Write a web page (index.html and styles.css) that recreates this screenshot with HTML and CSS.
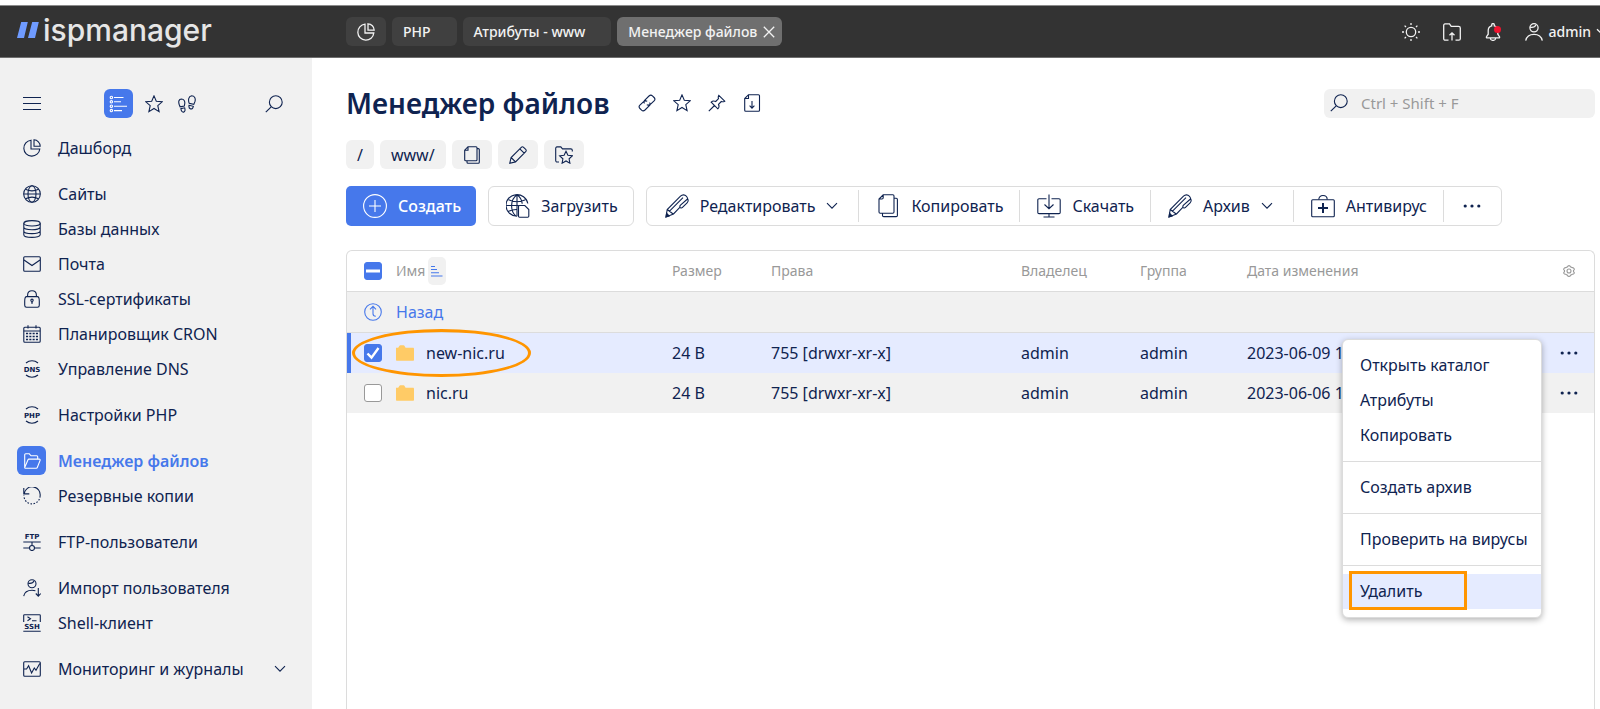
FILE: index.html
```html
<!DOCTYPE html>
<html lang="ru">
<head>
<meta charset="utf-8">
<meta name="viewport" content="width=device-width, initial-scale=1">
<title>Менеджер файлов — ispmanager</title>
<link rel="stylesheet" href="styles.css">
</head>
<body>
<svg class="sprite" aria-hidden="true">
  <symbol id="pie" viewBox="0 0 18 18"><path d="M8 1.2A8 8 0 1 0 16.8 10H8zM11 .8v6.4h6.2A6.5 6.5 0 0 0 11 .8z"/></symbol>
  <symbol id="star" viewBox="0 0 18 18"><path d="M9 .9l2.3 5.3 5.9.6-4.400 3.900 1.300 5.900L9 13.500l-5.100 3.100 1.300-5.900L.8 6.800l5.900-.6z"/></symbol>
  <symbol id="feet" viewBox="0 0 18 18"><path d="M1.200 9.500C.2 6.500.8 4.200 3.400 4c2.600 0 3.800 2.300 3.300 4.900l-.4 2.100-4.200.8zM2.900 13.600l3.800-.8c.6 2.300.4 4-1.100 4.300-1.600.3-2.400-1.400-2.700-3.500zM11.200 8.300c-1.200-3.200-.7-7.200 2.400-7.500 3 0 4.200 2.600 3.400 5.600l-1.200 3zM11 10.300l4.300 1c-.4 2-1.300 3-2.800 2.600-1.400-.4-1.800-1.700-1.500-3.600z"/></symbol>
  <symbol id="search" viewBox="0 0 18 18"><circle cx="10.800" cy="7.200" r="6.400"/><path d="M6.200 11.800L.8 17.200"/></symbol>
  <symbol id="globe" viewBox="0 0 18 18"><circle cx="9" cy="9" r="8.300"/><ellipse cx="9" cy="9" rx="4" ry="8.300"/><path d="M.7 9h16.600M2.500 4.200c4 2 9 2 13 0M2.500 13.800c4-2 9-2 13 0"/></symbol>
  <symbol id="db" viewBox="0 0 18 18"><ellipse cx="9" cy="3.300" rx="8.200" ry="2.700"/><path d="M.8 3.300v11.400c0 3.600 16.400 3.600 16.400 0V3.300M.8 7.100c0 3.600 16.400 3.600 16.400 0M.8 10.900c0 3.600 16.400 3.600 16.400 0"/></symbol>
  <symbol id="mail" viewBox="0 0 18 18"><rect x=".7" y="1.800" width="16.600" height="14.400" rx="1"/><path d="M1 5l8 5.500L17 5"/></symbol>
  <symbol id="lock" viewBox="0 0 18 18"><path d="M3.600 6.600h10.800c1 0 1.900 2.200 1.900 4.700v3.900c0 1.200-.6 2-1.800 2h-11c-1.200 0-1.800-.8-1.800-2v-3.900c0-2.500.9-4.700 1.900-4.700zM4.600 6.400V5.200C4.600 2.400 6.500.7 9 .7s4.400 1.700 4.400 4.500v1.200"/><circle cx="9" cy="10.300" r="1.200"/><path d="M9 11.500v2.200" stroke-width="1.400"/></symbol>
  <symbol id="calendar" viewBox="0 0 18 18"><rect x=".8" y="2.300" width="16.400" height="15" rx="1"/><path d="M.8 6h16.400M5 .3v3.200M13 .3v3.200"/><path d="M3 8.500h12M3 11.500h12M3 14.500h12" stroke-dasharray="2.100 1.200" stroke-width="1.700"/></symbol>
  <symbol id="dns" viewBox="0 0 18 18"><path d="M3 3a9 9 0 0 1 12 0M3 15a9 9 0 0 0 12 0"/><text x="9" y="11.600" text-anchor="middle" class="glyph">DNS</text></symbol>
  <symbol id="php" viewBox="0 0 18 18"><path d="M3 3a9 9 0 0 1 12 0M3 15a9 9 0 0 0 12 0"/><text x="9" y="11.600" text-anchor="middle" class="glyph">PHP</text></symbol>
  <symbol id="folder-open" viewBox="0 0 18 18"><path d="M1.700 15.300V2.800c0-.6.400-1 1-1h3.600l1.700 2h5.700c.6 0 1 .4 1 1v2.400M1.700 15.600L5 7.700c.2-.4.500-.6.900-.6h10.300c.8 0 1.200.6.900 1.300l-2.800 7.100c-.2.500-.5.700-1 .7H2.200c-.4 0-.6-.3-.5-.6z"/></symbol>
  <symbol id="restore" viewBox="0 0 18 18"><path d="M.8.900v6h5.500M1.200 6.600A8 8 0 0 1 17.100 9"/><path d="M17.100 9A8.100 8.100 0 0 1 .9 8.500" stroke-dasharray="1.600 1.500"/></symbol>
  <symbol id="ftp" viewBox="0 0 18 18"><text x="9" y="6" text-anchor="middle" class="glyph">FTP</text><path d="M.3 9h17.400M9 9v3.300M.3 15h6M11.700 15h6"/><circle cx="9" cy="15" r="2.500"/></symbol>
  <symbol id="import" viewBox="0 0 18 18"><circle cx="9" cy="4.700" r="4"/><path d="M5.200 4.200c3 .6 5-.4 6-2.400M.7 17.200c.8-4.400 4-6 8.300-6 1.400 0 2.500.2 3.400.5M15.300 9v8M12.800 14.500l2.500 2.600 2.400-2.600"/></symbol>
  <symbol id="ssh" viewBox="0 0 18 18"><path d="M.7 8V1.500c0-.5.3-.8.8-.8h15c.5 0 .8.300.8.8V8M4.500 2.800l3 2-3 2M9 6.800h4.500M.3 17.300h17.400"/><text x="9" y="14.800" text-anchor="middle" class="glyph">SSH</text></symbol>
  <symbol id="monitor" viewBox="0 0 18 18"><rect x=".7" y="1.700" width="16.600" height="14.600" rx="1"/><path d="M1 9h2.600l2-3.300 3 7.300L11.300 8l1.700 2.300L16.800 3.500"/></symbol>
  <symbol id="chevron" viewBox="0 0 12 8"><path d="M1 1.200l5 5 5-5"/></symbol>
  <symbol id="close" viewBox="0 0 12 12"><path d="M.8.800l10.400 10.400M11.200.8L.8 11.200"/></symbol>
  <symbol id="sun" viewBox="0 0 18 18"><circle cx="9" cy="9" r="4.700"/><path d="M9 0v2M9 16v2M0 9h2M16 9h2M2.600 2.600L4 4M14 14l1.400 1.400M2.600 15.400L4 14M14 4l1.400-1.400"/></symbol>
  <symbol id="upload-folder" viewBox="0 0 18 18"><path d="M5.500 17.200H2.300c-1 0-1.600-.6-1.600-1.500V2.500C.7 1.500 1.200.9 2 .9h4.500l1.700 2.400h7.300c1.100 0 1.800.6 1.800 1.600v10.800c0 .9-.6 1.500-1.600 1.500h-3.200M9 17.500V10M6.500 12.300L9 9.800l2.500 2.500"/></symbol>
  <symbol id="bell" viewBox="0 0 18 18"><path d="M9 .6c.8 0 1.300.5 1.300 1.300v1c2.300.6 3.500 2.400 3.500 4.700v3.600l1.700 2.500c.3.700 0 1.200-.7 1.200H3.200c-.7 0-1-.5-.7-1.200l1.700-2.500V7.600c0-2.300 1.200-4.100 3.500-4.700v-1C7.700 1.100 8.200.6 9 .6zM6.200 15c.2 1.500 1.300 2.400 2.800 2.400s2.600-.9 2.800-2.400"/></symbol>
  <symbol id="user" viewBox="0 0 18 18"><circle cx="9" cy="4.800" r="4.100"/><path d="M5.100 4.200c3 .6 5-.4 6-2.400M.7 17.600c.9-4.300 4-6.300 8.300-6.300s7.400 2 8.300 6.300"/></symbol>
  <symbol id="link" viewBox="0 0 18 18"><path d="M6.500 9.300c-.9-1-.9-2 .1-3L11 2c1.100-1 2.400-1.100 3.400-.2l1.700 1.700c1 1 1 2.300 0 3.300L12.900 9.900c-1.200 1.200-2.700 1.400-4.100.9M11.500 8.700c.9 1 .9 2-.1 3L7 16c-1.100 1-2.400 1.100-3.400.2l-1.700-1.700c-1-1-1-2.300 0-3.300l3.200-3.100c1.200-1.200 2.700-1.400 4.100-.9"/></symbol>
  <symbol id="pin" viewBox="0 0 18 18"><path d="M10.800 1.300l5.900 5.900c-1.300.8-2.300.8-3.400.3l-2.800 2.800c.9 1.800.6 3.400-.7 4.500L3.200 8.200c1.200-1.300 2.800-1.500 4.500-.7l2.800-2.800c-.5-1.100-.4-2.200.3-3.400zM6.500 11.500L.8 17.200"/></symbol>
  <symbol id="file-down" viewBox="0 0 18 18"><path d="M5.500.7h10c.6 0 1 .4 1 1v14.600c0 .6-.4 1-1 1H2.700c-.6 0-1-.4-1-1V4.500zM5.500.9v3.600H1.900M9 7v7M6.600 11.700L9 14.100l2.400-2.400"/></symbol>
  <symbol id="copy" viewBox="0 0 18 18"><path d="M5 .7h8c.5 0 1 .4 1 1v12.100c0 .6-.5 1-1 1H2.700c-.6 0-1-.4-1-1V4.200zM5 .9v3.300H1.900M14 2.600h1.300c.6 0 1 .4 1 1v12.700c0 .6-.4 1-1 1H5c-.6 0-1-.4-1-1v-1.400"/></symbol>
  <symbol id="pencil" viewBox="0 0 18 18"><path d="M.8 17.200l1.300-5.700L12.300 1.300c.7-.7 1.600-.7 2.300 0l2.100 2.100c.7.700.7 1.600 0 2.300L6.500 15.900zM2.100 11.500l4.400 4.400M10.800 2.800l4.400 4.400"/></symbol>
  <symbol id="folder-star" viewBox="0 0 18 18"><path d="M4 16H2.200C1.300 16 .7 15.500.7 14.500V2.500c0-1 .5-1.600 1.300-1.600h3.800l1.700 2h8.300c.9 0 1.500.4 1.500 1.300v1.300M11 5.300l1.900 4 4.400.5-3.200 3 .8 4.400-3.900-2.200-3.900 2.200.8-4.400-3.200-3 4.400-.5z"/></symbol>
  <symbol id="plus" viewBox="0 0 24 24"><circle cx="12" cy="12" r="11.400"/><path d="M12 6v12M6 12h12"/></symbol>
  <symbol id="globe-file" viewBox="0 0 24 24"><path d="M11 22.200A11 10.800 0 1 1 21.800 9.500M11 .8c-7 5-7 16-1 21.400M11 .8v21.400M11 .8c3.500 2.500 5 5.500 5.200 9M2.600 5.800c5.200 2.500 11.600 2.500 16.800 0M.6 11.500H13M2.600 17.200c2.600-1.200 5.400-1.800 8.400-1.700"/><path d="M12.500 22.300v-9.800c0-.6.400-1 1-1h5.300l4 4v6.800c0 .5-.4.900-1 .9h-8.300c-.6 0-1-.4-1-.9z" class="knockout"/></symbol>
  <symbol id="pen" viewBox="0 0 24 24"><path d="M1 23l1.200-7.500L15.500 2.200c2-2 4.300-1.600 5.800 0 .8.800 1.200 1.600 1.300 2.600.9 1.500.5 3-.5 4L17.500 13.400c-1 1-2.100.6-2.500-.2L8.500 20zM2.200 15.500l6.300 4.700M4.500 17.200L18 3.700M15 13.200c-.4-.9 0-1.500.5-2l7-6.200"/><path d="M1 23l.6-3.700 2.500 2.700z" fill="currentColor"/></symbol>
  <symbol id="copy-lg" viewBox="0 0 24 24"><path d="M7.200.8h9.600c.7 0 1.200.5 1.200 1.200v16c0 .7-.5 1.200-1.200 1.200H4.200C3.500 19.200 3 18.700 3 18V5zM7.200 1v2.800c0 .7-.5 1.200-1.200 1.200H3.200M18 4.200h2.200c.7 0 1.200.5 1.200 1.200v16c0 .7-.5 1.200-1.200 1.200H7.700c-.7 0-1.200-.5-1.200-1.200v-2.200"/></symbol>
  <symbol id="download" viewBox="0 0 24 24"><path d="M9.500 4.700H2c-.7 0-1.200.5-1.200 1.200v12.500c0 .7.500 1.200 1.200 1.200h20c.7 0 1.200-.5 1.200-1.200V5.900c0-.7-.5-1.200-1.200-1.200h-7.500M12 .5v14M7.500 10.500l4.500 4.200 4.500-4.200M12 19.800v3M6.500 23h11"/></symbol>
  <symbol id="medkit" viewBox="0 0 24 24"><rect x=".7" y="5.700" width="22.600" height="17" rx="1"/><path d="M7.800 5.500c0-2.300 1.700-4 4.200-4s4.200 1.700 4.200 4"/><path d="M12 9v10M7 14h10" stroke-width="2"/></symbol>
  <symbol id="dots" viewBox="0 0 18 6"><g fill="currentColor" stroke="none"><circle cx="2.200" cy="3" r="1.600"/><circle cx="9" cy="3" r="1.600"/><circle cx="15.800" cy="3" r="1.600"/></g></symbol>
  <symbol id="gear" viewBox="0 0 12 12"><path d="M6 .6c.8 0 1.200.2 1.500 1.200l1.800.9c1.200-.2 1.500.3 2 1.200.2.800-.1 1-.8 1.600v1.200c.8.500 1 .8.700 1.500-.5.900-.8 1.200-1.900 1.100l-1.700.9c-.4 1-.8 1.200-1.600 1.200s-1.200-.2-1.600-1.200l-1.700-.9c-1.100.1-1.400-.2-1.900-1.100-.3-.7-.1-1 .7-1.500V5.500C.8 4.900.5 4.700.7 3.900c.5-.9.800-1.400 2-1.200l1.800-.9C4.800.8 5.200.6 6 .6z"/><circle cx="6" cy="6" r="2"/></symbol>
  <symbol id="back" viewBox="0 0 18 18"><circle cx="9" cy="9" r="8.300"/><path d="M6 6.400l3-3 3 3M9 3.600v7.200c0 1.600.8 2.500 2.800 2.500"/></symbol>
  <symbol id="folder" viewBox="0 0 18 16"><path d="M0 2.700h2.200L3.500.8c.2-.3.500-.5.900-.5h3.200c.4 0 .7.2.8.5l1.200 1.900h7.300c.7 0 1.100.4 1.100 1.100v10.900c0 .7-.4 1.100-1.100 1.100H1.100c-.7 0-1.100-.4-1.100-1.100z" fill="#ffcb66" stroke="none"/></symbol>
</svg>

<header class="topbar">
  <a class="logo" href="#" aria-label="ispmanager">
    <svg class="logo-mark" viewBox="0 0 22 16" aria-hidden="true"><path d="M4.200 0h6.600L7 16H0zM15.200 0h6.600L18 16h-7z" fill="#6f9bff"/></svg>
    <span>ispmanager</span>
  </a>
  <nav class="tabs" aria-label="Вкладки">
    <a class="tab tab-icon" href="#" aria-label="Дашборд"><svg class="icon"><use href="#pie"/></svg></a>
    <a class="tab tab-wide" href="#">PHP</a>
    <a class="tab tab-wide" href="#">Атрибуты - www</a>
    <div class="tab tab-active"><a href="#">Менеджер файлов</a><button type="button" class="tab-close" aria-label="Закрыть"><svg class="icon-xs"><use href="#close"/></svg></button></div>
  </nav>
  <div class="tools">
    <button type="button" aria-label="Тема"><svg class="icon"><use href="#sun"/></svg></button>
    <button type="button" aria-label="Загрузки"><svg class="icon"><use href="#upload-folder"/></svg></button>
    <button type="button" class="bell" aria-label="Уведомления"><svg class="icon"><use href="#bell"/></svg><span class="bell-dot"></span></button>
    <button type="button" class="account"><svg class="icon"><use href="#user"/></svg><span>admin</span><svg class="icon-chev"><use href="#chevron"/></svg></button>
  </div>
</header>

<div class="layout">
  <aside class="sidebar">
    <div class="side-tools">
      <button type="button" class="burger" aria-label="Свернуть меню"><span></span><span></span><span></span></button>
      <div class="side-modes">
        <button type="button" class="mode-active" aria-label="Список"><svg class="icon" viewBox="0 0 18 18"><path d="M5 2.500h9.500M5 6.800h7M5 11.200h13M5 15.600h8"/><circle cx="2.400" cy="2.500" r="1.200"/><circle cx="2.400" cy="6.800" r="1.200"/><circle cx="2.400" cy="11.200" r="1.200"/><circle cx="2.400" cy="15.600" r="1.200"/></svg></button>
        <button type="button" aria-label="Избранное"><svg class="icon"><use href="#star"/></svg></button>
        <button type="button" aria-label="История"><svg class="icon"><use href="#feet"/></svg></button>
      </div>
      <button type="button" aria-label="Поиск"><svg class="icon"><use href="#search"/></svg></button>
    </div>
    <nav class="menu" aria-label="Разделы">
      <ul><li><a href="#"><span class="ico"><svg class="icon"><use href="#pie"/></svg></span>Дашборд</a></li></ul>
      <ul>
        <li><a href="#"><span class="ico"><svg class="icon"><use href="#globe"/></svg></span>Сайты</a></li>
        <li><a href="#"><span class="ico"><svg class="icon"><use href="#db"/></svg></span>Базы данных</a></li>
        <li><a href="#"><span class="ico"><svg class="icon"><use href="#mail"/></svg></span>Почта</a></li>
        <li><a href="#"><span class="ico"><svg class="icon"><use href="#lock"/></svg></span>SSL-сертификаты</a></li>
        <li><a href="#"><span class="ico"><svg class="icon"><use href="#calendar"/></svg></span>Планировщик CRON</a></li>
        <li><a href="#"><span class="ico"><svg class="icon"><use href="#dns"/></svg></span>Управление DNS</a></li>
      </ul>
      <ul><li><a href="#"><span class="ico"><svg class="icon"><use href="#php"/></svg></span>Настройки PHP</a></li></ul>
      <ul>
        <li><a href="#" class="current" aria-current="page"><span class="ico"><svg class="icon"><use href="#folder-open"/></svg></span>Менеджер файлов</a></li>
        <li><a href="#"><span class="ico"><svg class="icon"><use href="#restore"/></svg></span>Резервные копии</a></li>
      </ul>
      <ul><li><a href="#"><span class="ico"><svg class="icon"><use href="#ftp"/></svg></span>FTP-пользователи</a></li></ul>
      <ul>
        <li><a href="#"><span class="ico"><svg class="icon"><use href="#import"/></svg></span>Импорт пользователя</a></li>
        <li><a href="#"><span class="ico"><svg class="icon"><use href="#ssh"/></svg></span>Shell-клиент</a></li>
      </ul>
      <ul><li><a href="#"><span class="ico"><svg class="icon"><use href="#monitor"/></svg></span>Мониторинг и журналы<svg class="icon-chev menu-chev"><use href="#chevron"/></svg></a></li></ul>
    </nav>
  </aside>

  <main class="content">
    <div class="title-row">
      <h1>Менеджер файлов</h1>
      <div class="title-actions">
        <button type="button" aria-label="Ссылка"><svg class="icon"><use href="#link"/></svg></button>
        <button type="button" aria-label="В избранное"><svg class="icon"><use href="#star"/></svg></button>
        <button type="button" aria-label="Закрепить"><svg class="icon"><use href="#pin"/></svg></button>
        <button type="button" aria-label="Выгрузить"><svg class="icon"><use href="#file-down"/></svg></button>
      </div>
      <label class="search"><svg class="icon" aria-hidden="true"><use href="#search"/></svg><input type="search" placeholder="Ctrl + Shift + F" aria-label="Поиск"></label>
    </div>

    <nav class="crumbs" aria-label="Путь">
      <a href="#">/</a>
      <a href="#">www/</a>
      <button type="button" aria-label="Копировать путь"><svg class="icon"><use href="#copy"/></svg></button>
      <button type="button" aria-label="Изменить путь"><svg class="icon"><use href="#pencil"/></svg></button>
      <button type="button" aria-label="Добавить в избранное"><svg class="icon"><use href="#folder-star"/></svg></button>
    </nav>

    <div class="toolbar">
      <button type="button" class="btn btn-primary"><svg class="icon-lg"><use href="#plus"/></svg>Создать</button>
      <button type="button" class="btn btn-outline"><svg class="icon-lg"><use href="#globe-file"/></svg>Загрузить</button>
      <div class="btn-group">
        <button type="button" class="btn btn-drop"><svg class="icon-lg"><use href="#pen"/></svg>Редактировать<svg class="icon-chev"><use href="#chevron"/></svg></button>
        <button type="button" class="btn"><svg class="icon-lg"><use href="#copy-lg"/></svg>Копировать</button>
        <button type="button" class="btn"><svg class="icon-lg"><use href="#download"/></svg>Скачать</button>
        <button type="button" class="btn btn-drop"><svg class="icon-lg"><use href="#pen"/></svg>Архив<svg class="icon-chev"><use href="#chevron"/></svg></button>
        <button type="button" class="btn"><svg class="icon-lg"><use href="#medkit"/></svg>Антивирус</button>
        <button type="button" class="btn btn-more" aria-label="Ещё"><svg class="icon-dots"><use href="#dots"/></svg></button>
      </div>
    </div>

    <div class="panel">
      <table class="files">
        <colgroup><col class="c-check"><col class="c-name"><col class="c-size"><col class="c-rights"><col class="c-owner"><col class="c-group"><col><col class="c-act"></colgroup>
        <thead>
          <tr>
            <th class="check"><input type="checkbox" class="box box-mixed" checked aria-label="Выбрать все"></th>
            <th><div class="name-head">Имя<button type="button" class="sort" aria-label="Сортировка"><svg viewBox="0 0 12 12"><path d="M0 1.500h4M0 4.500h6M0 7.700h8M0 11h11.500"/></svg></button></div></th>
            <th>Размер</th><th>Права</th><th>Владелец</th><th>Группа</th><th>Дата изменения</th>
            <th class="act"><button type="button" aria-label="Настройки таблицы"><svg class="icon-xs"><use href="#gear"/></svg></button></th>
          </tr>
        </thead>
        <tbody>
          <tr class="row-back">
            <td class="check"><svg class="icon"><use href="#back"/></svg></td>
            <td colspan="7"><a href="#">Назад</a></td>
          </tr>
          <tr class="row-selected">
            <td class="check"><input type="checkbox" class="box" id="f1" checked></td>
            <td class="name-cell"><label class="name" for="f1"><svg class="icon-folder"><use href="#folder"/></svg>new-nic.ru</label><span class="ring"></span></td>
            <td>24 В</td><td>755 [drwxr-xr-x]</td><td>admin</td><td>admin</td><td>2023-06-09 1</td>
            <td class="act menu-cell"><button type="button" aria-label="Действия" aria-expanded="true"><svg class="icon-dots"><use href="#dots"/></svg></button>
              <div class="popup">
                <button type="button">Открыть каталог</button>
                <button type="button">Атрибуты</button>
                <button type="button">Копировать</button>
                <hr>
                <button type="button">Создать архив</button>
                <hr>
                <button type="button">Проверить на вирусы</button>
                <hr>
                <button type="button" class="popup-current">Удалить<span class="frame"></span></button>
              </div>
            </td>
          </tr>
          <tr class="row-alt">
            <td class="check"><input type="checkbox" class="box" id="f2"></td>
            <td><label class="name" for="f2"><svg class="icon-folder"><use href="#folder"/></svg>nic.ru</label></td>
            <td>24 В</td><td>755 [drwxr-xr-x]</td><td>admin</td><td>admin</td><td>2023-06-06 1</td>
            <td class="act"><button type="button" aria-label="Действия"><svg class="icon-dots"><use href="#dots"/></svg></button></td>
          </tr>
        </tbody>
      </table>
    </div>
  </main>
</div>
</body>
</html>
```

FILE: styles.css
```css
:root {
  --navy: #0f2350;
  --blue: #4678eb;
  --grey: #f1f1f1;
  --line: #dcdcdc;
  --muted: #999;
  --orange: #ff9500;
}
* { box-sizing: border-box; }
body {
  display: flex;
  flex-direction: column;
  height: 100vh;
  margin: 0;
  padding-top: 5px;
  overflow: hidden;
  background: #fff;
  color: var(--navy);
  font: 16px/20px "Noto Sans", "Open Sans", sans-serif;
}
button {
  display: inline-flex;
  align-items: center;
  justify-content: center;
  margin: 0;
  padding: 0;
  border: 0;
  background: none;
  color: inherit;
  font: inherit;
  cursor: pointer;
}
a { color: inherit; text-decoration: none; }
svg { flex: none; fill: none; stroke: currentColor; stroke-width: 1.1; }
.sprite { display: none; }
.icon { width: 18px; height: 18px; }
.icon-lg { width: 24px; height: 24px; }
.icon-xs { width: 12px; height: 12px; }
.icon-chev { width: 12px; height: 8px; }
.icon-dots { width: 18px; height: 6px; }
.icon-folder { width: 18px; height: 16px; }
.glyph { font: 700 7px "DejaVu Sans", sans-serif; fill: currentColor; stroke: none; }
.knockout { fill: #fff; }

/* Top bar */
.topbar {
  display: flex;
  flex: none;
  align-items: center;
  height: 53px;
  border-top: 1px solid #8b8b8b;
  border-bottom: 1px solid #6e6e6e;
  background: #333;
  color: #f2f2f2;
  font-size: 14px;
  font-weight: 500;
}
.topbar svg { stroke-width: 1.3; }
.logo {
  display: flex;
  flex: none;
  align-items: center;
  gap: 4px;
  width: 346px;
  padding: 0 0 4px 17px;
  color: #e6e6e6;
  font: 500 30px/40px "Inter", sans-serif;
}
.topbar .logo-mark { width: 22px; height: 16px; stroke: none; }
.tabs { display: flex; gap: 6px; }
.tab {
  display: flex;
  align-items: center;
  height: 29px;
  padding: 0 7px 0 11px;
  border-radius: 6px;
  background: #404040;
}
.tab-icon { padding: 0 11px; }
.tab-wide { padding-right: 26px; }
.tab-active { gap: 6px; background: #6f6f6f; }
.tools { display: flex; align-items: center; gap: 23px; margin: 0 -8px 0 auto; }
.account { gap: 5px; }
.bell { position: relative; }
.bell-dot { position: absolute; top: 3px; right: 1px; width: 7px; height: 7px; border-radius: 50%; background: #f0142f; }

/* Sidebar */
.layout { display: flex; flex: 1; min-height: 0; }
.sidebar { flex: none; width: 312px; padding: 31px 29px 0 17px; background: var(--grey); }
.side-tools { display: flex; align-items: center; justify-content: space-between; height: 29px; padding-left: 6px; }
.burger { flex-direction: column; gap: 5px; }
.burger span { width: 18px; height: 1px; background: var(--navy); }
.side-modes { display: flex; gap: 9px; padding-right: 4px; }
.side-modes button { min-width: 24px; }
.side-modes .mode-active { width: 29px; height: 29px; border-radius: 6px; background: var(--blue); color: #fff; }
.menu { display: flex; flex-direction: column; gap: 11px; padding-top: 12px; }
.menu ul { margin: 0; padding: 0; list-style: none; }
.menu a { display: flex; align-items: center; gap: 12px; height: 35px; white-space: nowrap; }
.ico { display: flex; align-items: center; justify-content: center; width: 29px; height: 29px; border-radius: 6px; }
.menu .current { color: var(--blue); font-weight: 600; }
.current .ico { background: var(--blue); color: #fff; }
.menu-chev { margin: 0 -3px 0 auto; }

/* Content */
.content { display: flex; flex: 1; flex-direction: column; min-width: 0; padding: 25px 5px 0 34px; }
.title-row { display: flex; align-items: center; height: 40px; }
h1 { margin: 0; font-size: 28px; line-height: 40px; font-weight: 600; white-space: nowrap; }
.title-actions { display: flex; gap: 17px; padding-left: 28px; }
.search {
  display: flex;
  align-items: center;
  gap: 13px;
  width: 271px;
  height: 29px;
  margin-left: auto;
  padding: 0 6px;
  border-radius: 6px;
  background: var(--grey);
}
.search input { flex: 1; min-width: 0; padding: 0; border: 0; outline: 0; background: none; color: inherit; font: inherit; font-size: 15px; }
.search input::placeholder { color: var(--muted); opacity: 1; }
.crumbs { display: flex; gap: 6px; padding-top: 17px; }
.crumbs > * {
  display: flex;
  align-items: center;
  height: 29px;
  padding: 0 11px;
  border-radius: 6px;
  background: var(--grey);
}
.toolbar { display: flex; gap: 12px; padding-top: 17px; }
.btn { gap: 11px; height: 40px; padding: 0 15px 0 17px; white-space: nowrap; }
.btn-primary { border-radius: 5px; background: var(--blue); color: #fff; font-weight: 500; }
.btn-outline, .btn-group { border: 1px solid var(--line); border-radius: 6px; }
.btn-group { display: flex; height: 40px; }
.btn-group .btn { position: relative; height: 38px; padding: 0 16px 0 18px; }
.btn-group .btn-drop { padding-right: 20px; }
.btn-group .btn + .btn::before { content: ""; position: absolute; top: 3px; bottom: 3px; left: 0; width: 1px; background: var(--line); }
.btn-group .btn-more { padding: 0 20px; }

/* Table */
.panel { flex: 1; min-height: 0; margin-top: 24px; border: 1px solid var(--line); border-bottom: 0; border-radius: 6px 6px 0 0; }
.files { width: 100%; border-collapse: collapse; table-layout: fixed; }
.c-check { width: 49px; }
.c-name { width: 276px; }
.c-size { width: 99px; }
.c-rights { width: 250px; }
.c-owner { width: 119px; }
.c-group { width: 107px; }
.c-act { width: 50px; }
.files th, .files td { height: 41px; padding: 0; text-align: left; white-space: nowrap; }
.files th { height: 40px; border-bottom: 1px solid var(--line); color: var(--muted); font-size: 14px; font-weight: 400; }
.files .check { padding-left: 17px; }
.files .check > * { display: block; }
.act > button { display: flex; width: 100%; height: 20px; }
.name-head { display: flex; align-items: center; gap: 3px; }
.sort { width: 18px; height: 28px; border-radius: 5px; background: var(--grey); color: var(--blue); }
.sort svg { width: 12px; height: 12px; }
.row-back td { border-bottom: 1px solid var(--line); background: var(--grey); color: var(--blue); }
.row-selected { background: #e5ebff; }
.row-selected .check { box-shadow: inset 4px 0 var(--blue); }
.row-alt { background: var(--grey); }
.files .row-alt td { height: 40px; }
.name { display: flex; align-items: center; gap: 12px; }
.name-cell, .menu-cell { position: relative; }
.box {
  appearance: none;
  width: 18px;
  height: 18px;
  margin: 0;
  border: 1px solid #999;
  border-radius: 3px;
  background: #fff center / 14px 14px no-repeat;
}
.box:checked {
  border-color: var(--blue);
  background-color: var(--blue);
  background-image: url("data:image/svg+xml,%3Csvg xmlns='http://www.w3.org/2000/svg' viewBox='0 0 14 14'%3E%3Cpath d='M1.500 7.500l4 4.200L12.500 2' fill='none' stroke='white' stroke-width='2.400'/%3E%3C/svg%3E");
}
.box-mixed:checked {
  background-image: url("data:image/svg+xml,%3Csvg xmlns='http://www.w3.org/2000/svg' viewBox='0 0 14 14'%3E%3Cpath d='M0 7h14' stroke='white' stroke-width='3'/%3E%3C/svg%3E");
}
.ring {
  position: absolute;
  top: -4px;
  left: -44px;
  width: 179px;
  height: 48px;
  border: 3px solid var(--orange);
  border-radius: 50%;
  pointer-events: none;
}

/* Row menu */
.popup {
  position: absolute;
  z-index: 2;
  top: 6px;
  right: 52px;
  width: 200px;
  padding: 8px 0;
  border: 1px solid var(--line);
  border-radius: 6px;
  background: #fff;
  box-shadow: 0 2px 6px rgba(0, 0, 0, .3);
}
.popup button { position: relative; display: flex; justify-content: flex-start; width: 100%; height: 35px; padding: 0 17px; }
.popup hr { height: 1px; margin: 8px 0; border: 0; background: var(--line); }
.popup .popup-current { background: #e5ebff; }
.frame { position: absolute; top: -3px; left: 6px; width: 118px; height: 39px; border: 3px solid var(--orange); }
```
